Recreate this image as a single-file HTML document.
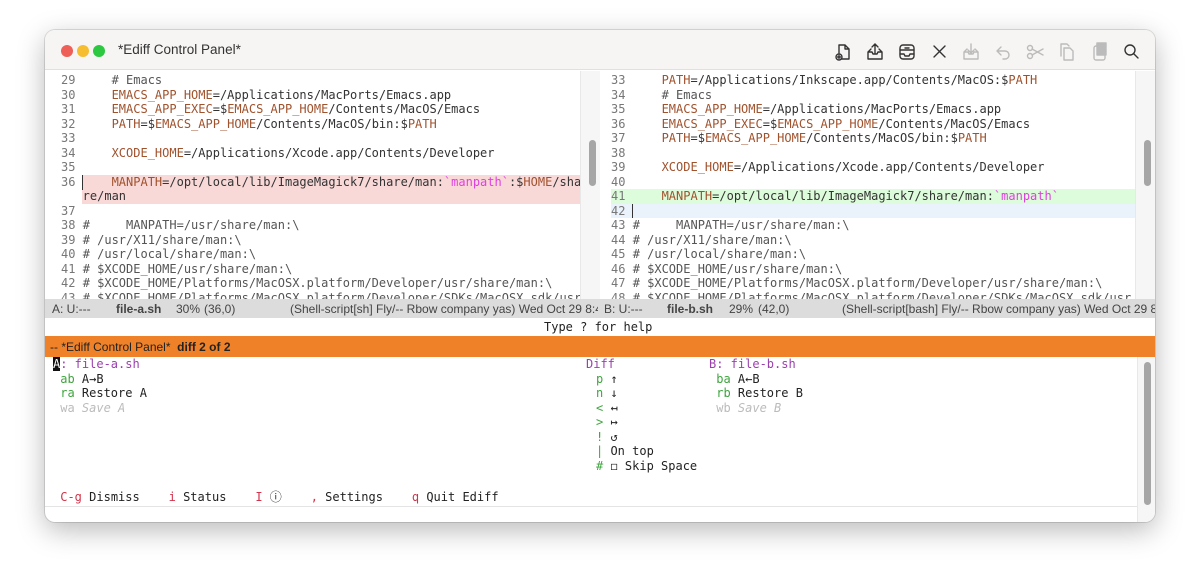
<!DOCTYPE html>
<html><head><meta charset="utf-8"><style>
*{margin:0;padding:0;box-sizing:border-box}
body{width:1200px;height:582px;background:#fff;position:relative;overflow:hidden;font-family:"DejaVu Sans Mono","Liberation Mono",monospace}
.win{position:absolute;left:45px;top:30px;width:1110px;height:492px;border-radius:10px;background:#fff;box-shadow:0 8px 28px rgba(0,0,0,.28),0 0 0 1px rgba(0,0,0,.12);overflow:hidden}
.tb{position:absolute;left:0;top:0;width:1110px;height:40px;background:#f7f5f3;border-bottom:1px solid #e2e0de}
.dot{position:absolute;top:15px;width:12px;height:12px;border-radius:6px}
.title{position:absolute;left:73px;top:12px;font:13.5px "Liberation Sans",sans-serif;color:#333}
.code{position:absolute;font-size:12px;line-height:14.5px;white-space:pre;color:#333;height:14.5px}
.n{color:#777}.v{color:#a0522d}.m{color:#e040e0}.c{color:#555}
.ml{position:absolute;top:269px;height:19px;left:0;width:1110px;background:#dcdcdc;font:12px "Liberation Sans",sans-serif;color:#444}
.ml span{position:absolute;top:3px;white-space:nowrap}
.sb{position:absolute;background:#a6a6a6;border-radius:4px;width:7px}
.p{position:absolute;font-size:12px;line-height:14.5px;white-space:pre;color:#222}
.g{color:#3fa53f}.pu{color:#9b3fae}.r{color:#d0344a}.gr{color:#bbb}
</style></head><body>
<div class="win">
<div class="tb">
<div class="dot" style="left:16px;background:#ee5f57"></div>
<div class="dot" style="left:32px;background:#f5bd2f"></div>
<div class="dot" style="left:48px;background:#2bc840"></div>
<div class="title">*Ediff Control Panel*</div>
<svg style="position:absolute;left:787px;top:11px" width="320" height="22" fill="none" stroke-width="1.4" stroke-linecap="round" stroke-linejoin="round">
<g stroke="#333"><path d="M7 4h6l4 4v10h-8M7 4v8M13 4v4h4"/><circle cx="7" cy="16" r="3"/><path d="M7 14.5v3M5.5 16h3"/></g>
<g stroke="#333" transform="translate(33,0)"><path d="M3 11v7h14v-7l-3-3M6 8l-3 3h4l1 2h4l1-2h4M10 12V3M7 6l3-3 3 3"/></g>
<g stroke="#333" transform="translate(65,0)"><rect x="3" y="4" width="14" height="14" rx="3"/><path d="M3 9h14M3 13h4l1 2h4l1-2h4M8 7h4"/></g>
<g stroke="#333" transform="translate(97,0)"><path d="M5 5l11 11M16 5L5 16"/></g>
<g stroke="#bbb" transform="translate(129,0)"><path d="M3 11v7h14v-7l-3-3M6 8l-3 3h4l1 2h4l1-2h4M10 3v9M7 9l3 3 3-3"/></g>
<g stroke="#bbb" transform="translate(161,0)"><path d="M8 6L4 10l4 4M4 10h8a4 4 0 0 1 0 8h-2"/></g>
<g stroke="#bbb" transform="translate(193,0)"><circle cx="5" cy="7" r="2.5"/><circle cx="5" cy="15" r="2.5"/><path d="M7 8l11 6M7 14l11-6"/></g>
<g stroke="#bbb" transform="translate(225,0)"><path d="M7 7h6l3 3v9H7zM4 15V3h6l2 2"/></g>
<g stroke="#bbb" transform="translate(257,0)"><rect x="5" y="5" width="11" height="14" rx="2"/><path d="M8 5V3h8l1 2" /><rect x="8" y="2" width="9" height="12" fill="#bbb"/></g>
<g stroke="#333" transform="translate(289,0)"><circle cx="9" cy="9" r="5"/><path d="M13 13l4 4"/></g>
</svg>
</div>

<!-- left pane -->
<div style="position:absolute;left:37px;top:144.5px;width:498px;height:29.5px;background:#f9d8d8"></div>
<div style="position:absolute;left:37px;top:145px;width:1px;height:15px;background:#333"></div>
<div class="code" style="left:16px;top:43px"><span class="n">29</span>     <span class="c"># Emacs</span></div>
<div class="code" style="left:16px;top:57.5px"><span class="n">30</span>     <span class="v">EMACS_APP_HOME</span>=/Applications/MacPorts/Emacs.app</div>
<div class="code" style="left:16px;top:72px"><span class="n">31</span>     <span class="v">EMACS_APP_EXEC</span>=$<span class="v">EMACS_APP_HOME</span>/Contents/MacOS/Emacs</div>
<div class="code" style="left:16px;top:86.5px"><span class="n">32</span>     <span class="v">PATH</span>=$<span class="v">EMACS_APP_HOME</span>/Contents/MacOS/bin:$<span class="v">PATH</span></div>
<div class="code" style="left:16px;top:101px"><span class="n">33</span></div>
<div class="code" style="left:16px;top:115.5px"><span class="n">34</span>     <span class="v">XCODE_HOME</span>=/Applications/Xcode.app/Contents/Developer</div>
<div class="code" style="left:16px;top:130px"><span class="n">35</span></div>
<div class="code" style="left:16px;top:144.5px"><span class="n">36</span>     <span class="v">MANPATH</span>=/opt/local/lib/ImageMagick7/share/man:<span class="m">`manpath`</span>:$<span class="v">HOME</span>/sha</div>
<div class="code" style="left:16px;top:159px">   re/man</div>
<div class="code" style="left:16px;top:173.5px"><span class="n">37</span></div>
<div class="code" style="left:16px;top:188px"><span class="n">38</span> <span class="c">#     MANPATH=/usr/share/man:\</span></div>
<div class="code" style="left:16px;top:202.5px"><span class="n">39</span> <span class="c"># /usr/X11/share/man:\</span></div>
<div class="code" style="left:16px;top:217px"><span class="n">40</span> <span class="c"># /usr/local/share/man:\</span></div>
<div class="code" style="left:16px;top:231.5px"><span class="n">41</span> <span class="c"># $XCODE_HOME/usr/share/man:\</span></div>
<div class="code" style="left:16px;top:246px"><span class="n">42</span> <span class="c"># $XCODE_HOME/Platforms/MacOSX.platform/Developer/usr/share/man:\</span></div>
<div class="code" style="left:16px;top:260.5px;height:9px;overflow:hidden"><span class="n">43</span> <span class="c"># $XCODE_HOME/Platforms/MacOSX.platform/Developer/SDKs/MacOSX.sdk/usr</span></div>
<div style="position:absolute;left:535px;top:41px;width:20px;height:228px;background:#f6f6f6;border-left:1px solid #e8e8e8"></div>
<div class="sb" style="left:544px;top:110px;height:46px"></div>

<!-- right pane -->
<div style="position:absolute;left:566px;top:159px;width:524px;height:14.5px;background:#ddfcdb"></div>
<div style="position:absolute;left:566px;top:173.5px;width:524px;height:14.5px;background:#eaf2fc"></div>
<div style="position:absolute;left:587px;top:174px;width:1px;height:14px;background:#333"></div>
<div class="code" style="left:566px;top:43px"><span class="n">33</span>     <span class="v">PATH</span>=/Applications/Inkscape.app/Contents/MacOS:$<span class="v">PATH</span></div>
<div class="code" style="left:566px;top:57.5px"><span class="n">34</span>     <span class="c"># Emacs</span></div>
<div class="code" style="left:566px;top:72px"><span class="n">35</span>     <span class="v">EMACS_APP_HOME</span>=/Applications/MacPorts/Emacs.app</div>
<div class="code" style="left:566px;top:86.5px"><span class="n">36</span>     <span class="v">EMACS_APP_EXEC</span>=$<span class="v">EMACS_APP_HOME</span>/Contents/MacOS/Emacs</div>
<div class="code" style="left:566px;top:101px"><span class="n">37</span>     <span class="v">PATH</span>=$<span class="v">EMACS_APP_HOME</span>/Contents/MacOS/bin:$<span class="v">PATH</span></div>
<div class="code" style="left:566px;top:115.5px"><span class="n">38</span></div>
<div class="code" style="left:566px;top:130px"><span class="n">39</span>     <span class="v">XCODE_HOME</span>=/Applications/Xcode.app/Contents/Developer</div>
<div class="code" style="left:566px;top:144.5px"><span class="n">40</span></div>
<div class="code" style="left:566px;top:159px"><span class="n">41</span>     <span class="v">MANPATH</span>=/opt/local/lib/ImageMagick7/share/man:<span class="m">`manpath`</span></div>
<div class="code" style="left:566px;top:173.5px"><span class="n">42</span></div>
<div class="code" style="left:566px;top:188px"><span class="n">43</span> <span class="c">#     MANPATH=/usr/share/man:\</span></div>
<div class="code" style="left:566px;top:202.5px"><span class="n">44</span> <span class="c"># /usr/X11/share/man:\</span></div>
<div class="code" style="left:566px;top:217px"><span class="n">45</span> <span class="c"># /usr/local/share/man:\</span></div>
<div class="code" style="left:566px;top:231.5px"><span class="n">46</span> <span class="c"># $XCODE_HOME/usr/share/man:\</span></div>
<div class="code" style="left:566px;top:246px"><span class="n">47</span> <span class="c"># $XCODE_HOME/Platforms/MacOSX.platform/Developer/usr/share/man:\</span></div>
<div class="code" style="left:566px;top:260.5px;height:9px;overflow:hidden"><span class="n">48</span> <span class="c"># $XCODE_HOME/Platforms/MacOSX.platform/Developer/SDKs/MacOSX.sdk/usr</span></div>
<div style="position:absolute;left:1090px;top:41px;width:20px;height:228px;background:#f6f6f6;border-left:1px solid #e8e8e8"></div>
<div class="sb" style="left:1099px;top:110px;height:46px"></div>

<!-- modeline -->
<div class="ml">
<span style="left:7px">A: U:---</span><span style="left:71px;font-weight:bold">file-a.sh</span><span style="left:131px">30%</span><span style="left:159px">(36,0)</span><span style="left:245px;width:308px;overflow:hidden">(Shell-script[sh] Fly/-- Rbow company yas) Wed Oct 29 8:43</span>
<span style="left:559px">B: U:---</span><span style="left:622px;font-weight:bold">file-b.sh</span><span style="left:684px">29%</span><span style="left:713px">(42,0)</span><span style="left:797px">(Shell-script[bash] Fly/-- Rbow company yas) Wed Oct 29 8:</span>
</div>
<div class="p" style="left:499px;top:290px">Type ? for help</div>
<div style="position:absolute;left:0;top:306px;width:1110px;height:21px;background:#ef8228;font:12px 'Liberation Sans',sans-serif;color:#222;padding:4px 5px;white-space:pre">-- *Ediff Control Panel*  <b>diff 2 of 2</b></div>

<!-- control panel -->
<div class="p" style="left:8px;top:327px"><span style="background:#111;color:#fff">A</span><span class="pu">: file-a.sh</span></div>
<div class="p" style="left:8px;top:341.5px"> <span class="g">ab</span> A→B</div>
<div class="p" style="left:8px;top:356px"> <span class="g">ra</span> Restore A</div>
<div class="p" style="left:8px;top:370.5px"> <span class="gr">wa <i>Save A</i></span></div>
<div class="p" style="left:541px;top:327px"><span class="pu">Diff</span></div>
<div class="p" style="left:551px;top:341.5px"><span class="g">p</span> ↑</div>
<div class="p" style="left:551px;top:356px"><span class="g">n</span> ↓</div>
<div class="p" style="left:551px;top:370.5px"><span class="g">&lt;</span> ↤</div>
<div class="p" style="left:551px;top:385px"><span class="g">&gt;</span> ↦</div>
<div class="p" style="left:551px;top:399.5px"><span class="g">!</span> ↺</div>
<div class="p" style="left:551px;top:414px"><span class="g">|</span> On top</div>
<div class="p" style="left:551px;top:428.5px"><span class="g">#</span> ◻ Skip Space</div>
<div class="p" style="left:664px;top:327px"><span class="pu">B: file-b.sh</span></div>
<div class="p" style="left:664px;top:341.5px"> <span class="g">ba</span> A←B</div>
<div class="p" style="left:664px;top:356px"> <span class="g">rb</span> Restore B</div>
<div class="p" style="left:664px;top:370.5px"> <span class="gr">wb <i>Save B</i></span></div>
<div class="p" style="left:8px;top:460px"> <span class="r">C-g</span> Dismiss    <span class="r">i</span> Status    <span class="r">I</span> ⓘ    <span class="r">,</span> Settings    <span class="r">q</span> Quit Ediff</div>
<div style="position:absolute;left:0;top:476px;width:1092px;height:1px;background:#e4e4e4"></div>
<div style="position:absolute;left:1092px;top:327px;width:18px;height:165px;background:#f6f6f6;border-left:1px solid #e8e8e8"></div>
<div class="sb" style="left:1099px;top:332px;height:143px"></div>
</div>
</body></html>
